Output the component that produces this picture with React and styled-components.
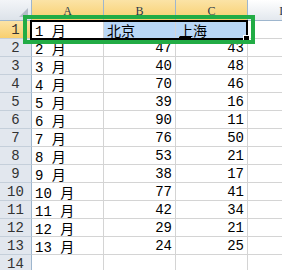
import React from 'react';
import styled, { createGlobalStyle, css } from 'styled-components';

const GlobalStyle = createGlobalStyle`
  html, body { margin: 0; padding: 0; background: #ffffff; }
  body { width: 282px; height: 270px; overflow: hidden; }
`;

const rows = [
  ['1 月', '北京', '上海'],
  ['2 月', 47, 43],
  ['3 月', 40, 48],
  ['4 月', 70, 46],
  ['5 月', 39, 16],
  ['6 月', 90, 11],
  ['7 月', 76, 50],
  ['8 月', 53, 21],
  ['9 月', 38, 17],
  ['10 月', 77, 41],
  ['11 月', 42, 34],
  ['12 月', 29, 21],
  ['13 月', 24, 25],
  ['', '', ''],
];

const Sheet = styled.div`
  position: relative;
  width: 282px;
  height: 270px;
  overflow: hidden;
  display: grid;
  grid-template-columns: 32px 72px 72px 72px 72px;
  grid-template-rows: 21px repeat(14, 18px);
  font-family: 'Liberation Mono', 'Noto Sans CJK SC', monospace;
  background: #fff;
`;

const Corner = styled.div`
  position: relative;
  background: linear-gradient(#f3f5f8, #dde3ea);
  border-right: 1px solid #9eb6ce;
  border-bottom: 1px solid #9eb6ce;
  &:after {
    content: '';
    position: absolute;
    right: 3px;
    bottom: 3px;
    border-left: 9px solid transparent;
    border-bottom: 9px solid #b3bcc7;
  }
`;

const ColHead = styled.div`
  display: flex;
  justify-content: center;
  align-items: flex-start;
  padding-top: 4px;
  box-sizing: border-box;
  font-family: 'Liberation Serif', serif;
  font-size: 12px;
  color: #2b3a4a;
  border-right: 1px solid #9eb6ce;
  border-bottom: 1px solid #9eb6ce;
  background: ${(p) =>
    p.$active
      ? 'linear-gradient(#fbe3a6, #f8cf6e)'
      : 'linear-gradient(#ffffff, #e3e8ee)'};
  ${(p) => p.$active && css`border-bottom-color: #f2a33a;`}
`;

const RowHead = styled.div`
  display: flex;
  justify-content: center;
  align-items: center;
  font-size: 14px;
  color: #333;
  border-right: 1px solid #9eb6ce;
  border-bottom: 1px solid #c5cfda;
  background: ${(p) => (p.$active ? 'linear-gradient(#fbe3a6, #f8cf6e)' : '#e2e7ee')};
`;

const Cell = styled.div`
  display: flex;
  align-items: center;
  justify-content: ${(p) => (p.$num ? 'flex-end' : 'flex-start')};
  padding: 0 3px;
  box-sizing: border-box;
  font-size: 14px;
  color: #000;
  white-space: pre;
  border-right: 1px solid #d4d4d4;
  border-bottom: 1px solid #d4d4d4;
  background: ${(p) => (p.$sel ? '#b9d7f6' : '#fff')};
`;

const Selection = styled.div`
  position: absolute;
  left: 30px;
  top: 20px;
  width: 218px;
  height: 20px;
  box-sizing: border-box;
  border: 2px solid #000;
  pointer-events: none;
  &:after {
    content: '';
    position: absolute;
    right: -4px;
    bottom: -4px;
    width: 5px;
    height: 5px;
    background: #000;
    border: 1px solid #fff;
  }
`;

const Cursor = styled.div`
  position: absolute;
  left: 179px;
  top: 37px;
  width: 12px;
  height: 1px;
  background: #000;
`;

const Highlight = styled.div`
  position: absolute;
  left: 23px;
  top: 15px;
  width: 232px;
  height: 29px;
  box-sizing: border-box;
  border: 4px solid #22ac45;
  pointer-events: none;
`;

export default function App() {
  return (
    <>
      <GlobalStyle />
      <Sheet>
        <Corner />
        <ColHead $active>A</ColHead>
        <ColHead $active>B</ColHead>
        <ColHead $active>C</ColHead>
        <ColHead>D</ColHead>
        {rows.map((r, i) => (
          <React.Fragment key={i}>
            <RowHead $active={i === 0}>{i + 1}</RowHead>
            <Cell>{r[0]}</Cell>
            <Cell $num={i > 0} $sel={i === 0}>{r[1]}</Cell>
            <Cell $num={i > 0} $sel={i === 0}>{r[2]}</Cell>
            <Cell />
          </React.Fragment>
        ))}
        <Selection />
        <Cursor />
        <Highlight />
      </Sheet>
    </>
  );
}
